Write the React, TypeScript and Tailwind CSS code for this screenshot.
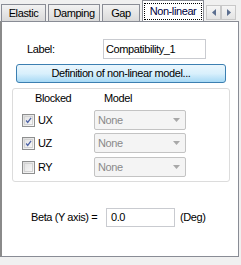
import React from 'react';

const font = { fontFamily: '"Liberation Sans", Arial, sans-serif' };

const Tab: React.FC<{ label: string; w: string }> = ({ label, w }) => (
    <div className={`${w} h-[17px] mt-[4px] mr-[2px] flex items-center justify-center border border-b-0 border-[#898c95] bg-gradient-to-b from-[#f2f2f2] to-[#dadada] text-[11px] text-black leading-none`}>
        {label}
    </div>
);

const Check: React.FC<{ checked?: boolean }> = ({ checked }) => (
    <div className="w-[13px] h-[13px] border border-[#8e8f8f] bg-gradient-to-br from-[#dcdcdc] to-[#fbfbfb] flex items-center justify-center">
        <div className="w-[9px] h-[9px] border border-[#d2d2d2] flex items-center justify-center bg-gradient-to-br from-[#e4e4e4] to-[#f6f6f6]">
            {checked && (
                <svg width="9" height="9" viewBox="0 0 9 9">
                    <path d="M1.5 4.5 L3.5 7 L7.8 1" stroke="#4c61a5" strokeWidth="1.6" fill="none" />
                </svg>
            )}
        </div>
    </div>
);

const Combo: React.FC = () => (
    <div className="w-[92px] h-[20px] rounded-[2px] border border-[#c3c3c3] bg-[#f4f4f4] flex items-center justify-between pl-[3px] pr-[5px] text-[11px] text-[#8a8a8a]">
        <span>None</span>
        <svg width="7" height="4" viewBox="0 0 7 4">
            <path d="M0 0 H7 L3.5 4 Z" fill="#a8a8a8" />
        </svg>
    </div>
);

const Row: React.FC<{ label: string; checked?: boolean; mt: string }> = ({ label, checked, mt }) => (
    <div className={`flex items-center h-[20px] ${mt}`}>
        <div className="ml-[9px]"><Check checked={checked} /></div>
        <span className="ml-[3px] w-[56px] text-[11px]">{label}</span>
        <Combo />
    </div>
);

export default function App() {
    return (
        <div className="w-[241px] h-[265px] bg-[#f0f0f0] text-black tracking-[-0.4px] overflow-hidden" style={font}>
            {/* tab strip */}
            <div className="flex h-[21px] pl-[1px] relative">
                <Tab label="Elastic" w="w-[45px]" />
                <Tab label="Damping" w="w-[52px]" />
                <Tab label="Gap" w="w-[38px]" />
                <div className="w-[62px] h-[21px] relative z-10 -mb-[1px] border border-b-0 border-[#898c95] bg-white flex items-center justify-center">
                    <span className="w-[58px] h-[17px] text-[11px] leading-none border border-dotted border-black text-[#000040] flex items-center justify-center">Non-linear</span>
                </div>
                <div className="flex mt-[5px] ml-[2px] h-[15px]">
                    {['M5 0 L1 3.5 L5 7 Z', 'M1 0 L5 3.5 L1 7 Z'].map((d, i) => (
                        <div key={i} className="w-[15px] h-[15px] border border-[#c8c8c8] bg-gradient-to-b from-[#f5f5f5] to-[#e4e4e4] flex items-center justify-center">
                            <svg width="6" height="7" viewBox="0 0 6 7"><path d={d} fill="#5b6e8f" /></svg>
                        </div>
                    ))}
                </div>
            </div>

            {/* panel */}
            <div className="w-[239px] h-[236px] bg-white border border-[#898c95] border-l-2 border-l-[#8a8a8a] flex flex-col text-[11px]">
                <div className="flex items-center mt-[17px] h-[20px]">
                    <span className="ml-[25px] w-[76px]">Label:</span>
                    <div className="w-[103px] h-[20px] border border-[#c9cbd0] flex items-center pl-[2px]">Compatibility_1</div>
                </div>

                <button className="ml-[14px] mt-[5px] w-[210px] h-[19px] rounded-[3px] border border-[#3c7fb1] bg-gradient-to-b from-[#eaf6fd] via-[#d9f0fc] to-[#a7d9f5] text-[11px] leading-none tracking-[-0.4px] text-black flex items-center justify-center">
                    Definition of non-linear model...
                </button>

                <div className="ml-[10px] mt-[5px] w-[218px] h-[94px] border border-[#dcdcdc] rounded-[3px] flex flex-col">
                    <div className="flex mt-[3px] h-[13px] leading-[13px]">
                        <span className="ml-[22px] w-[69px]">Blocked</span>
                        <span>Model</span>
                    </div>
                    <Row label="UX" checked mt="mt-[5px]" />
                    <Row label="UZ" checked mt="mt-[3px]" />
                    <Row label="RY" mt="mt-[4px]" />
                </div>

                <div className="flex items-center mt-[26px] h-[19px]">
                    <span className="ml-[29px] w-[75px]">Beta (Y axis) =</span>
                    <div className="w-[69px] h-[19px] border border-[#c9cbd0] flex items-center pl-[4px]">0.0</div>
                    <span className="ml-[5px]">(Deg)</span>
                </div>
            </div>
        </div>
    );
}
